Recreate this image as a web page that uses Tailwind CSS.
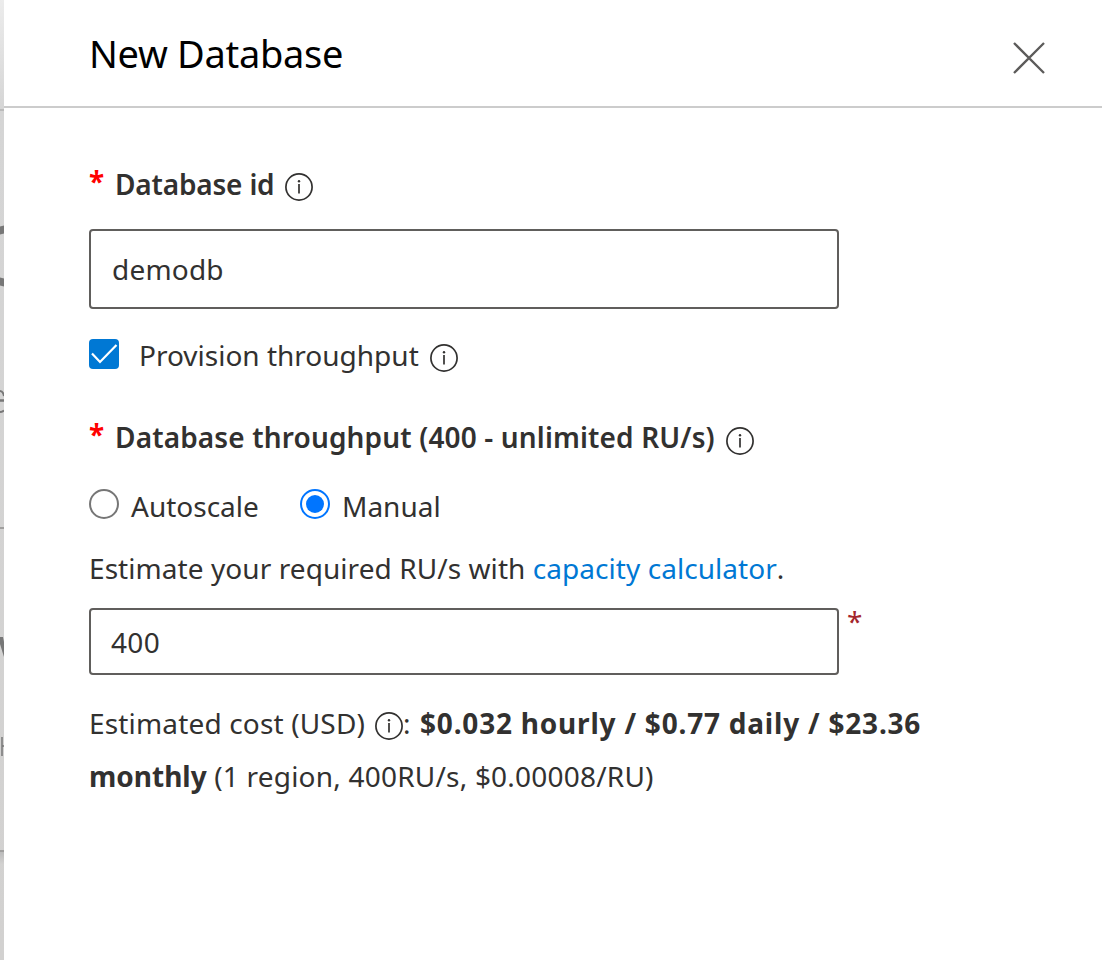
<!DOCTYPE html>
<html lang="en">
<head>
<meta charset="utf-8">
<title>New Database</title>
<script src="https://cdn.jsdelivr.net/npm/@tailwindcss/browser@4"></script>
</head>
<body class="bg-white">
<svg class="hidden">
  <symbol id="info" viewBox="0 0 28 28">
    <circle cx="14" cy="14" r="13.1" fill="none" stroke="#323130" stroke-width="1.7"/>
    <path d="M14 11v9.6" stroke="#323130" stroke-width="1.7"/>
    <circle cx="14" cy="8.2" r="1.2" fill="#323130"/>
  </symbol>
</svg>
<div class="flex w-[1102px] h-[960px] overflow-hidden font-['Noto_Sans','Open_Sans',sans-serif] text-[28px] leading-10 text-[#323130] whitespace-nowrap">
  <div class="relative w-1 h-full shrink-0 overflow-hidden bg-linear-to-b from-[#ececec] via-[#d5d5d5] via-[110px] to-[#d2d1d0]">
    <div class="absolute inset-x-0 top-[109px] h-[2px] bg-[#bbb]"></div>
    <div class="absolute left-0 top-[226px] w-1 h-2 bg-[#777] -skew-y-12"></div>
    <div class="absolute left-0 top-[278px] w-1 h-2 bg-[#777] skew-y-12"></div>
    <svg class="absolute left-0 top-[388px]" width="4" height="26" viewBox="0 0 4 26" fill="none" stroke="#777"><path d="M0 3Q3 3 4 8M0 24Q2 24 4 22.500" stroke-width="2"/><path d="M0 12.500H4" stroke-width="2.500"/></svg>
    <div class="absolute inset-x-0 top-[527px] h-[2px] bg-[#a09f9e]"></div>
    <svg class="absolute left-0 top-[637px]" width="4" height="20" viewBox="0 0 4 20"><path d="M0 0H3L4 5V20L0 7Z" fill="#777"/></svg>
    <svg class="absolute left-0 top-[737px]" width="4" height="19" viewBox="0 0 4 19"><path d="M2 0V19M2 9H4" stroke="#777" stroke-width="1.500"/></svg>
    <div class="absolute inset-x-0 top-[850px] h-[2px] bg-[#a09f9e]"></div>
    <div class="absolute inset-x-0 top-[852px] h-3 bg-linear-to-b from-[#bbb] to-[#d2d1d0]"></div>
  </div>
  <main class="flex-1 flex flex-col">
    <header class="h-[108px] border-b-2 border-[#ccc] pl-[85px] pr-[57px] flex justify-between">
      <h1 class="mt-[28px] h-[50px] leading-[50px] text-[38px] text-black tracking-[-0.3px]">New Database</h1>
      <svg class="mt-[42px]" width="32" height="32" viewBox="0 0 32 32" fill="none" stroke="#5c5b5a" stroke-width="2.300"><path d="M1 1L31 31M31 1L1 31"/></svg>
    </header>
    <form class="pl-[85px] flex flex-col">
      <label class="mt-[56px] h-10 flex items-center font-semibold"><span class="w-[26px] -mt-1.5 text-[#f00] font-bold">*</span><span class="tracking-[-0.18px]">Database id</span><svg class="ml-[11px] mt-[6px] size-7"><use href="#info"/></svg></label>
      <div class="mt-[25px] w-[750px] h-20 border-2 border-[#605e5c] rounded-[4px] pl-[21px] flex items-center"><span class="tracking-[0.2px]">demodb</span></div>
      <label class="mt-[26px] h-10 flex items-center">
        <svg class="size-[30px] mr-[20px] -mt-[2px]" viewBox="0 0 30 30"><rect width="30" height="30" rx="4" fill="#0078d4"/><path d="M3 14.500L11 23L27.500 6" fill="none" stroke="#fff" stroke-width="2.200"/></svg>
        <span>Provision throughput</span><svg class="ml-[11px] mt-[6px] size-7"><use href="#info"/></svg>
      </label>
      <label class="mt-[42px] h-10 flex items-center font-semibold"><span class="w-[26px] -mt-1.5 text-[#f00] font-bold">*</span><span class="tracking-[0.14px]">Database throughput (400 - unlimited RU/s)</span><svg class="ml-[11px] mt-[7px] size-7"><use href="#info"/></svg></label>
      <div class="mt-[29px] h-10 flex items-center">
        <svg class="size-[30px] mr-[12px] -mt-[4px]" viewBox="0 0 30 30"><circle cx="15" cy="15" r="14" fill="none" stroke="#767676" stroke-width="2"/></svg>
        <span class="w-[128px]">Autoscale</span>
        <svg class="ml-[41px] size-[30px] mr-[12px] -mt-[4px]" viewBox="0 0 30 30"><circle cx="15" cy="15" r="14" fill="none" stroke="#0075ff" stroke-width="2"/><circle cx="15" cy="15" r="9" fill="#0075ff"/></svg>
        <span>Manual</span>
      </div>
      <p class="mt-[22px] h-10 flex whitespace-pre"><span class="tracking-[0.07px]">Estimate your required RU/s with </span><a class="text-[#0078d4] tracking-[0.05px]">capacity calculator</a>.</p>
      <div class="mt-5 flex">
        <div class="w-[750px] h-[67px] border-2 border-[#605e5c] rounded-[4px] pl-[20px] flex items-center"><span class="tracking-[0.3px]">400</span></div>
        <span class="ml-[8px] -mt-[7px] text-[#a4262c]">*</span>
      </div>
      <p class="mt-[22px] leading-[53px]">
        <span class="flex whitespace-pre items-center"><span class="tracking-[0.16px]">Estimated cost (USD)</span><svg class="ml-[10px] mt-[5px] size-7"><use href="#info"/></svg><span class="w-[17px]">: </span><b class="tracking-[0.79px]">$0.032 hourly / $0.77 daily / $23.36</b></span>
        <span class="flex whitespace-pre"><b>monthly</b><span class="tracking-[0.21px]"> (1 region, 400RU/s, $0.00008/RU)</span></span>
      </p>
    </form>
  </main>
</div>
</body>
</html>
